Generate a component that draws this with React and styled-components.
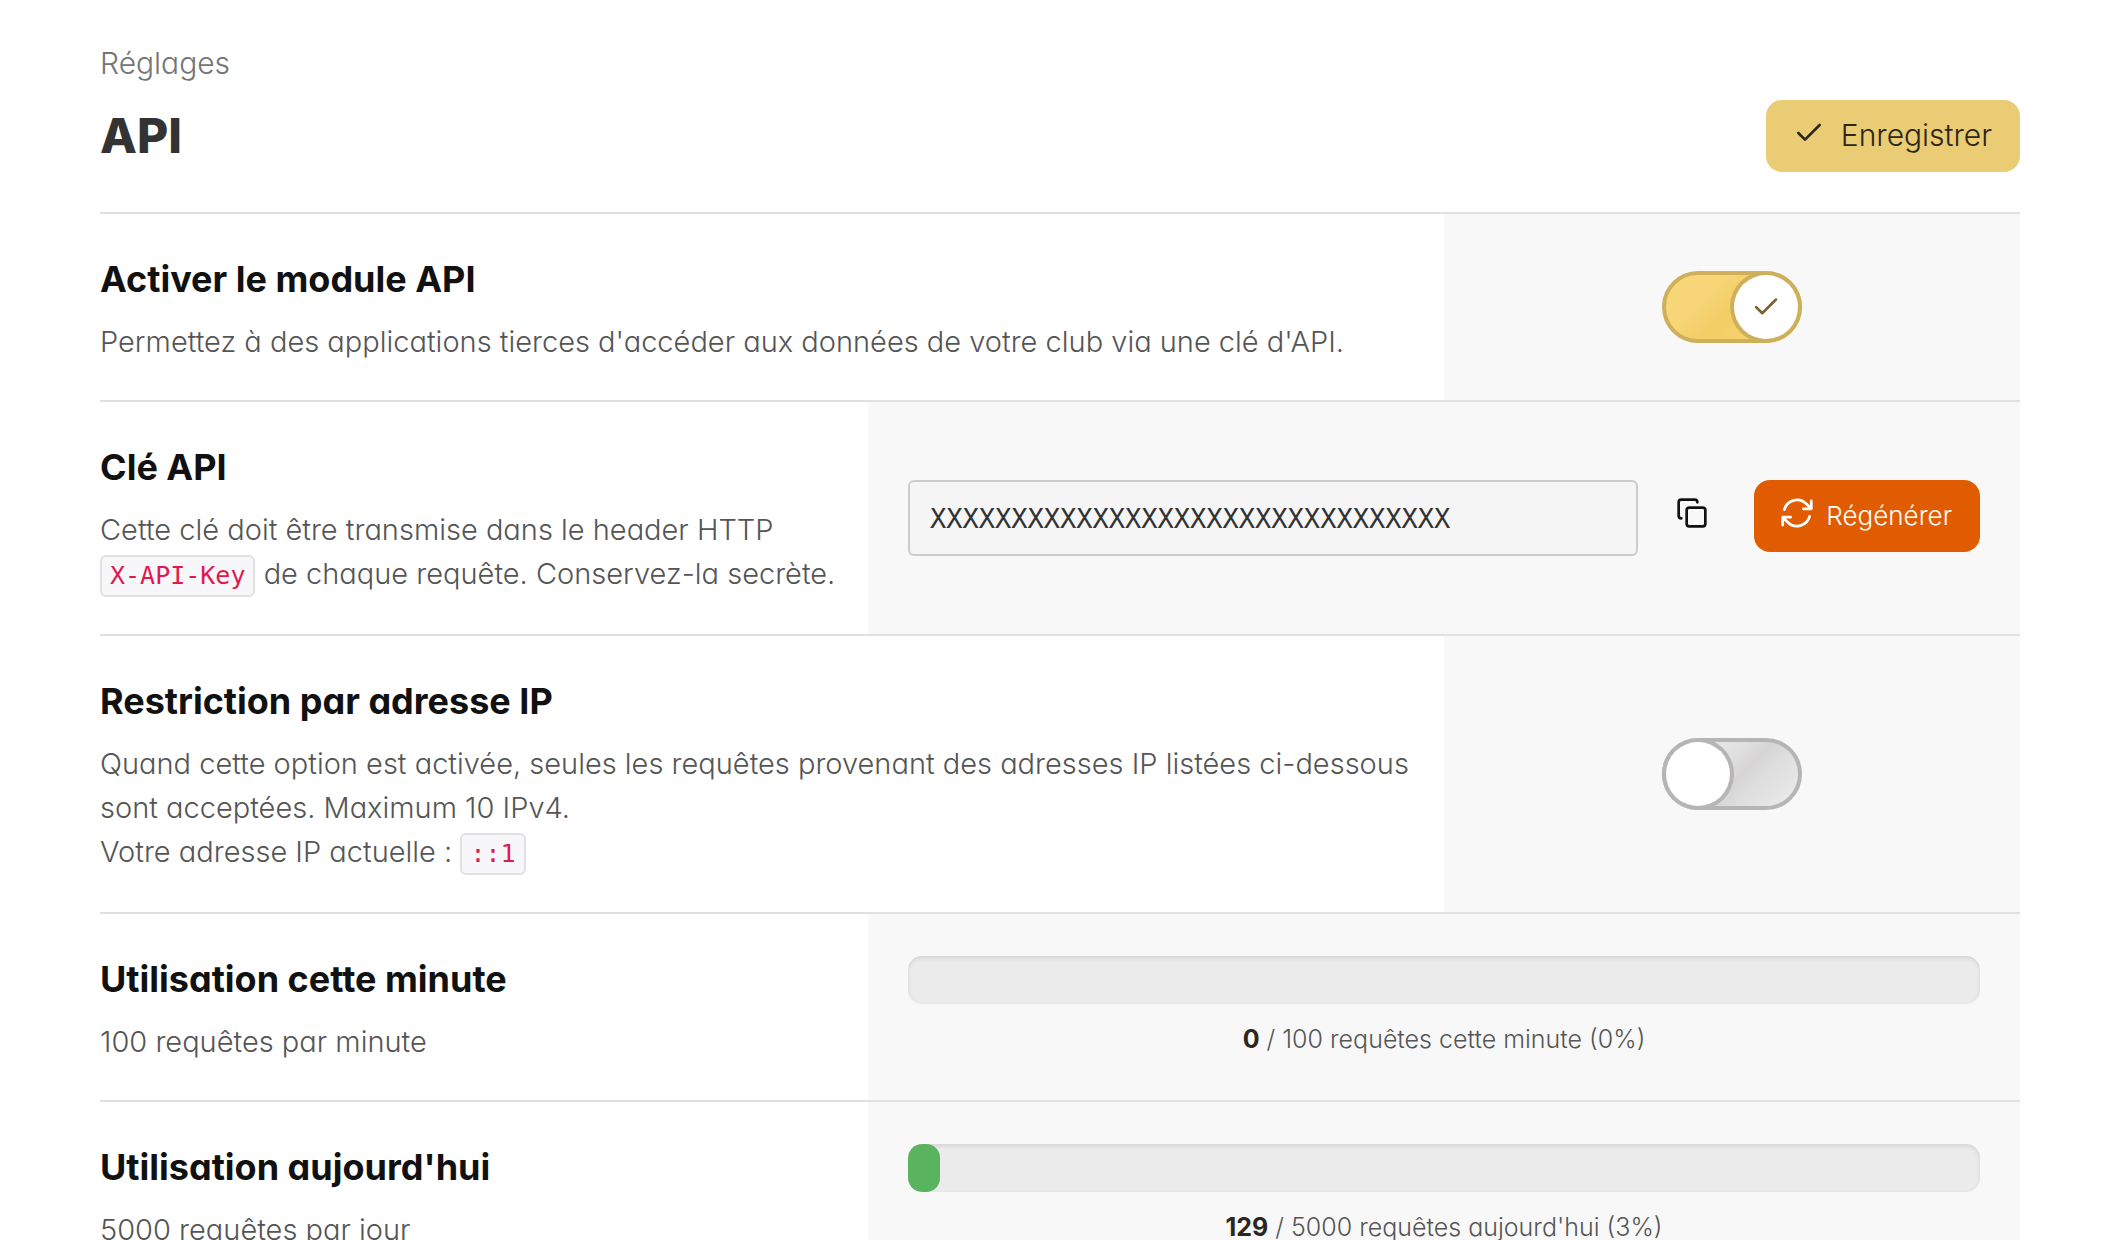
import React, { useState } from 'react'
import styled, { createGlobalStyle, css } from 'styled-components'
import { Check, Copy } from 'lucide-react'

const GlobalStyle = createGlobalStyle`
  * {
    box-sizing: border-box;
  }

  body {
    margin: 0;
    background: #fff;
    color: #2c261c;
    font-family: Inter, 'Liberation Sans', sans-serif;
    font-feature-settings: 'cv11';
    font-weight: 300;
  }
`

export const Page = styled.main`
  padding: 41px 100px 40px;
`

export const Breadcrumb = styled.p`
  margin: 0 0 15px;
  color: #757575;
  font-size: 30px;
  line-height: 44px;
`

export const Header = styled.header`
  display: flex;
  align-items: center;
  justify-content: space-between;
  margin-bottom: 40px;
`

export const Title = styled.h1`
  margin: 0;
  color: #333;
  font-size: 48px;
  font-weight: 800;
  line-height: 72px;
`

export const ButtonMixin = css`
  display: flex;
  flex-shrink: 0;
  align-items: center;
  height: 72px;
  border: 0;
  font-family: inherit;
  font-feature-settings: inherit;
  cursor: pointer;

  svg {
    margin-bottom: 4px;
  }
`

export const SaveButton = styled.button`
  ${ButtonMixin}
  gap: 16px;
  padding: 0 28px 2px 27px;
  border-radius: 16px;
  background: #eacc74;
  color: #2c261c;
  font-size: 30px;
  font-weight: 300;
`

export const DangerButton = styled.button`
  ${ButtonMixin}
  gap: 10px;
  padding: 0 28px 2px 24px;
  border-radius: 16px;
  background: #e15c00;
  color: #fff;
  font-size: 26px;
  font-weight: 300;
`

export const IconButton = styled.button`
  ${ButtonMixin}
  padding: 0 22px 2px 14px;
  background: none;
  color: #111;
`

export const Row = styled.section`
  display: flex;
  border-top: 2px solid #e0e0e0;
`

export const Info = styled.div`
  flex: 1;
  min-width: 0;
  padding: 43px 24px 36px 0;
`

export const Name = styled.h2`
  margin: 0 0 19px;
  color: #111;
  font-size: 36px;
  font-weight: 700;
  line-height: 44px;
`

export const Description = styled.p`
  margin: 0;
  color: #555;
  font-size: 29px;
  line-height: 44px;
`

export const Code = styled.code`
  display: inline-block;
  margin-bottom: 1px;
  padding: 0 8px;
  border: 2px solid #e1e1e1;
  border-radius: 6px;
  background: #f7f7f9;
  color: #e0194f;
  font-family: 'DejaVu Sans Mono', monospace;
  font-size: 25px;
  line-height: 38px;
`

export const Control = styled.div`
  display: flex;
  flex: 0 0 ${p => (p.$wide ? '60%' : '30%')};
  flex-direction: ${p => (p.$stacked ? 'column' : 'row')};
  align-items: ${p => (p.$stacked ? 'stretch' : 'center')};
  justify-content: center;
  padding: 0 40px;
  background: #f8f8f8;
`

export const KeyForm = styled.div`
  display: flex;
  flex: 1;
  gap: 24px;
`

export const KeyInput = styled.input`
  flex: 1;
  min-width: 0;
  height: 76px;
  padding: 0 20px;
  border: 2px solid #ccc;
  border-radius: 6px;
  background: #f5f5f5;
  color: #333;
  font-family: 'DejaVu Sans Mono', monospace;
  font-size: 27px;
`

export const SwitchTrack = styled.span`
  position: relative;
  display: flex;
  width: 140px;
  height: 72px;
  justify-content: ${p => (p.$on ? 'flex-end' : 'flex-start')};
  border: 4px solid ${p => (p.$on ? '#ceb05a' : '#b5b5b5')};
  border-radius: 36px;
  background: ${p => (p.$on
    ? 'linear-gradient(135deg, #f9d87b 0%, #f8d677 30%, #f3cd65 50%, #f9d87b 100%)'
    : 'linear-gradient(135deg, #eee 0%, #e2e1e1 40%, #d6d4d4 55%, #dedede 68%, #ececec 100%)')};
`

export const SwitchInput = styled.input`
  position: absolute;
  inset: 0;
  width: 100%;
  height: 100%;
  margin: 0;
  opacity: 0;
  cursor: pointer;
`

export const Knob = styled.span`
  display: flex;
  align-items: center;
  justify-content: center;
  width: 64px;
  height: 64px;
  border-radius: 50%;
  background: #fff;
  box-shadow: 0 0 0 4px ${p => (p.$on ? '#ceb05a' : '#b5b5b5')};
  color: #7a6230;
`

export const Bar = styled.div`
  height: 48px;
  overflow: hidden;
  border-radius: 14px;
  background: #ebebeb;
  box-shadow: inset 0 2px 4px rgba(0, 0, 0, 0.1);
`

export const BarFill = styled.div`
  height: 100%;
  border-radius: 14px;
  background: #5ab45f;
`

export const Caption = styled.p`
  margin: 16px 0 0;
  color: #555;
  font-size: 25px;
  line-height: 38px;
  text-align: center;

  strong {
    color: #2c261c;
    font-weight: 700;
  }
`

export const RefreshIcon = () => (
  <svg width="38" height="38" viewBox="0 0 24 24" fill="none" stroke="currentColor" strokeWidth="1.7" strokeLinecap="round" strokeLinejoin="round" aria-hidden="true">
    <path d="M16.023 9.348h4.992v-.001M2.985 19.644v-4.992m0 0h4.992m-4.993 0l3.181 3.183a8.25 8.25 0 0013.803-3.7M4.031 9.865a8.25 8.25 0 0113.803-3.7l3.181 3.182m0-4.991v4.99" />
  </svg>
)

export const Switch = ({ id, defaultOn = false }) => {
  const [on, setOn] = useState(defaultOn)
  return (
    <SwitchTrack $on={on}>
      <Knob $on={on}>{on && <Check size={30} />}</Knob>
      <SwitchInput id={id} type="checkbox" role="switch" checked={on} onChange={e => setOn(e.target.checked)} />
    </SwitchTrack>
  )
}

export const Usage = ({ id, used, max, unit }) => {
  const percent = Math.round((used / max) * 100)
  return (
    <Control $wide $stacked>
      <Bar role="progressbar" aria-labelledby={id} aria-valuenow={percent}>
        <BarFill style={{ width: `${percent}%` }} />
      </Bar>
      <Caption>
        <strong>{used}</strong> / {max} requêtes {unit} ({percent}%)
      </Caption>
    </Control>
  )
}

export const App = () => (
  <>
    <GlobalStyle />
    <Page>
      <Breadcrumb>Réglages</Breadcrumb>
      <Header>
        <Title>API</Title>
        <SaveButton type="button">
          <Check size={32} />
          Enregistrer
        </SaveButton>
      </Header>

      <Row>
        <Info>
          <Name><label htmlFor="api-enabled">Activer le module API</label></Name>
          <Description>
            Permettez à des applications tierces d'accéder aux données de votre club via une clé d'API.
          </Description>
        </Info>
        <Control>
          <Switch id="api-enabled" defaultOn />
        </Control>
      </Row>

      <Row>
        <Info>
          <Name><label htmlFor="api-key">Clé API</label></Name>
          <Description>
            Cette clé doit être transmise dans le header HTTP <Code>X-API-Key</Code> de chaque requête. Conservez-la secrète.
          </Description>
        </Info>
        <Control $wide>
          <KeyForm>
            <KeyInput id="api-key" readOnly value={'X'.repeat(32)} />
            <IconButton type="button" aria-label="Copier">
              <Copy size={32} />
            </IconButton>
            <DangerButton type="button">
              <RefreshIcon />
              Régénérer
            </DangerButton>
          </KeyForm>
        </Control>
      </Row>

      <Row>
        <Info>
          <Name><label htmlFor="ip-restriction">Restriction par adresse IP</label></Name>
          <Description>
            Quand cette option est activée, seules les requêtes provenant des adresses IP listées ci-dessous
            sont acceptées. Maximum 10 IPv4.
            <br />
            Votre adresse IP actuelle : <Code>::1</Code>
          </Description>
        </Info>
        <Control>
          <Switch id="ip-restriction" />
        </Control>
      </Row>

      <Row>
        <Info>
          <Name id="usage-minute">Utilisation cette minute</Name>
          <Description>100 requêtes par minute</Description>
        </Info>
        <Usage id="usage-minute" used={0} max={100} unit="cette minute" />
      </Row>

      <Row>
        <Info>
          <Name id="usage-day">Utilisation aujourd'hui</Name>
          <Description>5000 requêtes par jour</Description>
        </Info>
        <Usage id="usage-day" used={129} max={5000} unit="aujourd'hui" />
      </Row>
    </Page>
  </>
)

export default App
